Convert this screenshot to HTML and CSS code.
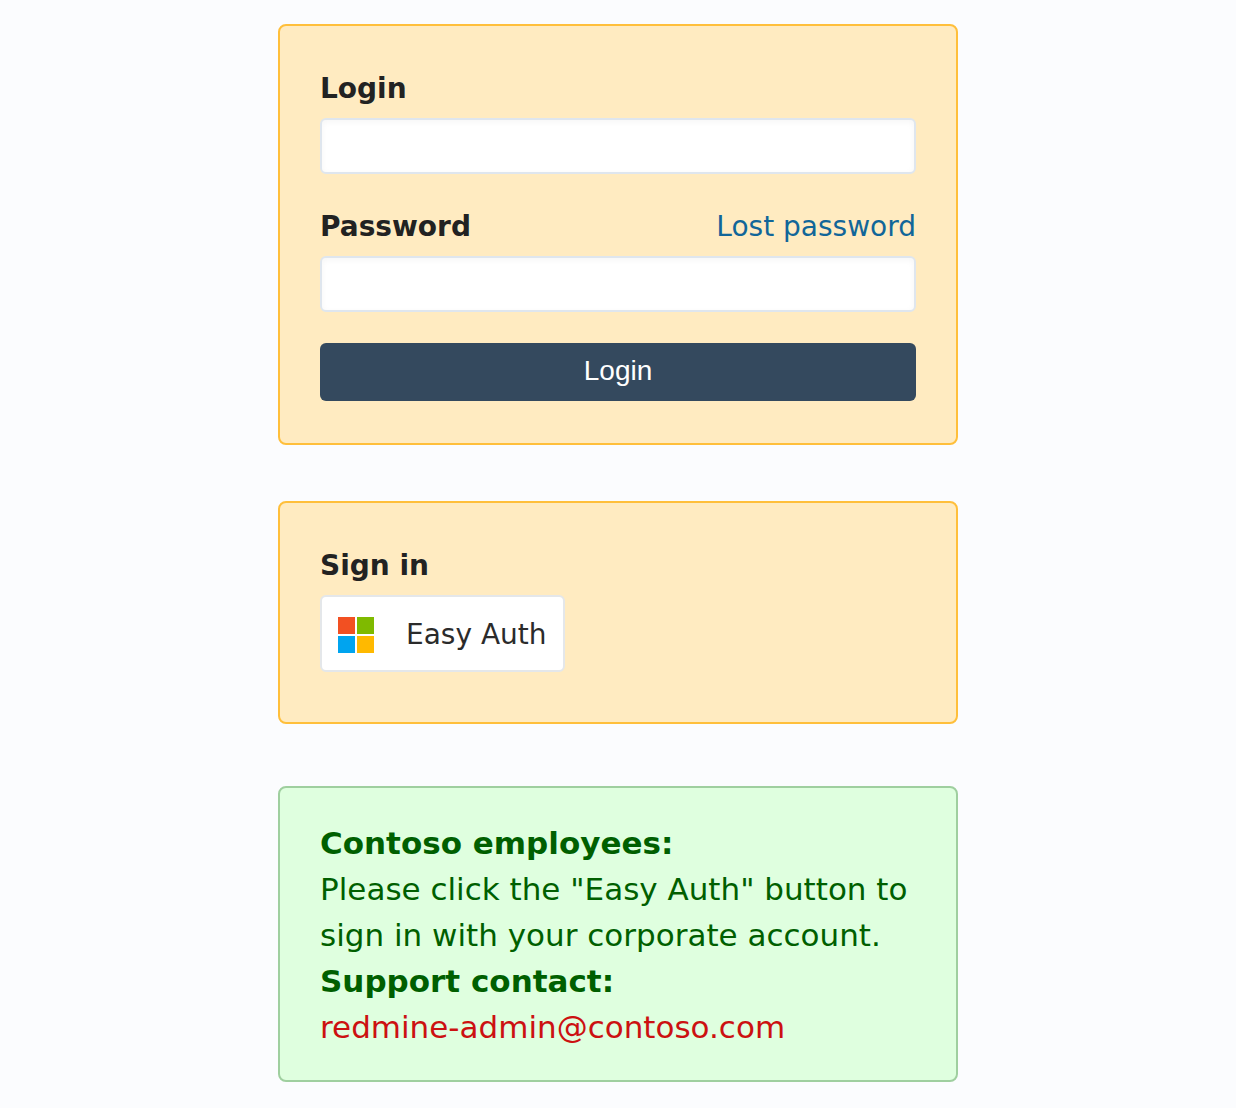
FILE: index.html
```
<!DOCTYPE html>
<html lang="en">
<head>
<meta charset="utf-8">
<title>Sign in</title>
<link rel="stylesheet" href="styles.css">
</head>
<body>
<main class="page">
  <form class="card login" action="#">
    <div class="label-row">
      <label for="username">Login</label>
    </div>
    <input class="field" id="username" type="text">
    <div class="label-row spaced">
      <label for="password">Password</label>
      <a class="lost" href="#">Lost password</a>
    </div>
    <input class="field" id="password" type="password">
    <button class="submit" type="submit">Login</button>
  </form>
  <section class="card signin">
    <h2 class="heading">Sign in</h2>
    <button class="provider" type="button">
      <svg class="logo" viewBox="0 0 36 36" aria-hidden="true">
        <path fill="#f25022" d="M0 0h17v17H0z"/>
        <path fill="#7fba00" d="M19 0h17v17H19z"/>
        <path fill="#00a4ef" d="M0 19h17v17H0z"/>
        <path fill="#ffb900" d="M19 19h17v17H19z"/>
      </svg>
      <span>Easy Auth</span>
    </button>
  </section>
  <section class="notice">
    <strong>Contoso employees:</strong>
    <p>Please click the "Easy Auth" button to sign in with your corporate account.</p>
    <strong>Support contact:</strong>
    <a class="contact" href="mailto:redmine-admin@contoso.com">redmine-admin@contoso.com</a>
  </section>
</main>
</body>
</html>
```
FILE: styles.css
```
* { box-sizing: border-box; }
body {
  margin: 0;
  background: #fbfcfe;
  color: #222;
  font: 28px/42px Verdana, "DejaVu Sans", sans-serif;
}
.page {
  max-width: 680px;
  margin: 0 auto;
  padding: 24px 0 26px;
}
.card {
  padding: 42px 40px;
  border: 2px solid #ffbf3b;
  border-radius: 8px;
  background: #ffebc1;
}
.login { margin-bottom: 56px; }
.label-row {
  display: flex;
  justify-content: space-between;
  margin-bottom: 8px;
}
.spaced { margin-top: 32px; }
label, .heading, strong { font-weight: 700; }
.lost { color: #116699; text-decoration: none; }
.field {
  display: block;
  width: 100%;
  height: 56px;
  padding: 0 12px;
  border: 2px solid #dfe6ee;
  border-radius: 6px;
  background: #fff;
  box-shadow: inset 0 2px 6px rgba(0, 0, 0, 0.04);
  font: inherit;
}
.submit {
  display: block;
  width: 100%;
  height: 58px;
  margin-top: 31px;
  padding: 0 0 2px;
  border: 0;
  border-radius: 6px;
  background: #34495e;
  color: #fff;
  font: 28px/42px "Liberation Sans", Arial, sans-serif;
}
.signin { margin-bottom: 62px; padding-bottom: 50px; }
.heading { margin: 0 0 8px; font-size: 28px; }
.provider {
  display: flex;
  align-items: center;
  gap: 32px;
  height: 77px;
  padding: 2px 16px 0;
  border: 2px solid #e4e7ea;
  border-radius: 6px;
  background: #fff;
  color: #2b2b2b;
  font: inherit;
}
.logo { width: 36px; height: 36px; }
.notice {
  padding: 32px 40px 30px;
  border: 2px solid #9fcf9f;
  border-radius: 8px;
  background: #dfffdf;
  color: #005f00;
  font-size: 31px;
  line-height: 46px;
}
.notice strong, .contact { display: block; }
.notice p { margin: 0; }
.contact { color: #cc1111; text-decoration: none; }
```
